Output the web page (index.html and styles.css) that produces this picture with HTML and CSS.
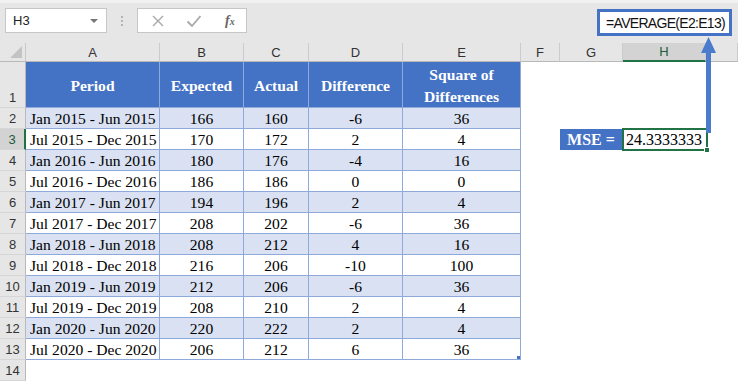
FILE: index.html
```html
<!DOCTYPE html>
<html lang="en">
<head>
    <meta charset="UTF-8">
    <meta name="viewport" content="width=device-width, initial-scale=1.0">
    <title>Mean Squared Error</title>
    <link rel="stylesheet" href="styles.css">
</head>
<body>
    <div class="formula-bar">
        <div class="name-box">
            <span>H3</span>
            <span class="caret"></span>
        </div>
        <div class="grip"><i></i><i></i><i></i></div>
        <div class="fx-buttons">
            <svg class="btn-icon" width="14" height="14" viewBox="0 0 14 14"><path d="M2 2 L12 12 M12 2 L2 12" stroke="#a8a8a8" stroke-width="1.4" fill="none"/></svg>
            <svg class="btn-icon" width="16" height="14" viewBox="0 0 16 14"><path d="M1.5 7.5 L6 12 L14.5 2" stroke="#a8a8a8" stroke-width="1.8" fill="none"/></svg>
            <span class="fx">f<sub>x</sub></span>
        </div>
    </div>

    <div class="callout">=AVERAGE(E2:E13)</div>
    <svg class="arrow" width="17" height="96" viewBox="0 0 17 96">
        <polygon points="8.5,0 16,16 1,16" fill="#4a7bcc"/>
        <rect x="6" y="15" width="5" height="81" fill="#4a7bcc"/>
    </svg>

    <div class="sheet">
        <!-- column headers -->
        <div class="corner"><span></span></div>
        <div class="col">A</div>
        <div class="col">B</div>
        <div class="col">C</div>
        <div class="col">D</div>
        <div class="col">E</div>
        <div class="col">F</div>
        <div class="col">G</div>
        <div class="col sel">H</div>
        <div class="col"></div>

        <div class="row">1</div>
        <div class="t th">Period</div>
        <div class="t th">Expected</div>
        <div class="t th">Actual</div>
        <div class="t th">Difference</div>
        <div class="t th">Square of<br>Differences</div>
        <div></div><div></div><div></div><div></div>

        <div class="row">2</div>
        <div class="t band l">Jan 2015 - Jun 2015</div>
        <div class="t band">166</div>
        <div class="t band">160</div>
        <div class="t band">-6</div>
        <div class="t band">36</div>
        <div></div><div></div><div></div><div></div>

        <div class="row sel">3</div>
        <div class="t l">Jul 2015 - Dec 2015</div>
        <div class="t">170</div>
        <div class="t">172</div>
        <div class="t">2</div>
        <div class="t">4</div>
        <div></div>
        <div class="mse-label">MSE =</div>
        <div class="mse-value">24.3333333<span class="handle"></span></div>
        <div></div>

        <div class="row">4</div>
        <div class="t band l">Jan 2016 - Jun 2016</div>
        <div class="t band">180</div>
        <div class="t band">176</div>
        <div class="t band">-4</div>
        <div class="t band">16</div>
        <div></div><div></div><div></div><div></div>

        <div class="row">5</div>
        <div class="t l">Jul 2016 - Dec 2016</div>
        <div class="t">186</div>
        <div class="t">186</div>
        <div class="t">0</div>
        <div class="t">0</div>
        <div></div><div></div><div></div><div></div>

        <div class="row">6</div>
        <div class="t band l">Jan 2017 - Jun 2017</div>
        <div class="t band">194</div>
        <div class="t band">196</div>
        <div class="t band">2</div>
        <div class="t band">4</div>
        <div></div><div></div><div></div><div></div>

        <div class="row">7</div>
        <div class="t l">Jul 2017 - Dec 2017</div>
        <div class="t">208</div>
        <div class="t">202</div>
        <div class="t">-6</div>
        <div class="t">36</div>
        <div></div><div></div><div></div><div></div>

        <div class="row">8</div>
        <div class="t band l">Jan 2018 - Jun 2018</div>
        <div class="t band">208</div>
        <div class="t band">212</div>
        <div class="t band">4</div>
        <div class="t band">16</div>
        <div></div><div></div><div></div><div></div>

        <div class="row">9</div>
        <div class="t l">Jul 2018 - Dec 2018</div>
        <div class="t">216</div>
        <div class="t">206</div>
        <div class="t">-10</div>
        <div class="t">100</div>
        <div></div><div></div><div></div><div></div>

        <div class="row">10</div>
        <div class="t band l">Jan 2019 - Jun 2019</div>
        <div class="t band">212</div>
        <div class="t band">206</div>
        <div class="t band">-6</div>
        <div class="t band">36</div>
        <div></div><div></div><div></div><div></div>

        <div class="row">11</div>
        <div class="t l">Jul 2019 - Dec 2019</div>
        <div class="t">208</div>
        <div class="t">210</div>
        <div class="t">2</div>
        <div class="t">4</div>
        <div></div><div></div><div></div><div></div>

        <div class="row">12</div>
        <div class="t band l">Jan 2020 - Jun 2020</div>
        <div class="t band">220</div>
        <div class="t band">222</div>
        <div class="t band">2</div>
        <div class="t band">4</div>
        <div></div><div></div><div></div><div></div>

        <div class="row">13</div>
        <div class="t l">Jul 2020 - Dec 2020</div>
        <div class="t">206</div>
        <div class="t">212</div>
        <div class="t">6</div>
        <div class="t last">36</div>
        <div></div><div></div><div></div><div></div>

        <div class="row">14</div>
        <div></div><div></div><div></div><div></div><div></div><div></div><div></div><div></div><div></div>
    </div>
</body>
</html>
```

FILE: styles.css
```css
* {
    box-sizing: border-box;
}

body {
    margin: 0;
    width: 738px;
    height: 382px;
    overflow: hidden;
    background-color: #fff;
    position: relative;
    font-family: "Liberation Serif", "Times New Roman", serif;
}

/* top strip with name box and formula buttons */
.formula-bar {
    height: 43px;
    background-color: #e6e6e6;
    border-top: 3px solid #f1f1f1;
    display: flex;
    align-items: flex-start;
    padding: 5px 0 0 5px;
    font-family: "Liberation Sans", Arial, sans-serif;
}

.name-box {
    width: 102px;
    height: 25px;
    background-color: #fff;
    border: 1px solid #c6c6c6;
    display: flex;
    align-items: center;
    justify-content: space-between;
    padding: 0 8px 0 7px;
    font-size: 13px;
    color: #222;
}

.caret {
    width: 0;
    height: 0;
    border-left: 4px solid transparent;
    border-right: 4px solid transparent;
    border-top: 4px solid #777;
}

.grip {
    width: 30px;
    height: 25px;
    display: flex;
    flex-direction: column;
    align-items: center;
    justify-content: center;
    gap: 2px;
}

.grip i {
    width: 2px;
    height: 2px;
    background-color: #b4b4b4;
}

.fx-buttons {
    width: 110px;
    height: 25px;
    background-color: #fff;
    border: 1px solid #c6c6c6;
    display: flex;
    align-items: center;
    padding: 0 0 0 13px;
    gap: 21px;
}

.fx {
    font-family: "Liberation Serif", serif;
    font-style: italic;
    font-weight: bold;
    font-size: 14px;
    color: #666;
    margin-left: 2px;
}

.fx sub {
    font-size: 10px;
    vertical-align: 0;
}

.callout {
    position: absolute;
    left: 597px;
    top: 9px;
    width: 135px;
    height: 27px;
    border: 3px solid #4472c4;
    background-color: #fff;
    font-family: "Liberation Sans", Arial, sans-serif;
    font-size: 14px;
    letter-spacing: -0.7px;
    color: #111;
    display: flex;
    align-items: center;
    justify-content: center;
    padding-left: 2px;
    z-index: 2;
}

.arrow {
    position: absolute;
    left: 700px;
    top: 37px;
    z-index: 3;
}

/* grid of cells */
.sheet {
    display: grid;
    grid-template-columns: 26px 134px 84px 65px 94px 118px 39px 63px 83px 32px;
    grid-template-rows: 19px 46px repeat(13, 21px);
}

.corner {
    background-color: #e6e6e6;
    border-right: 1px solid #c8c8c8;
    border-bottom: 1px solid #b9b9b9;
    position: relative;
}

.corner span {
    position: absolute;
    right: 3px;
    bottom: 3px;
    width: 0;
    height: 0;
    border-left: 12px solid transparent;
    border-bottom: 12px solid #c3c3c3;
}

.col {
    background-color: #e6e6e6;
    border-right: 1px solid #cbcbcb;
    border-bottom: 1px solid #b9b9b9;
    font-family: "Liberation Sans", Arial, sans-serif;
    font-size: 13px;
    color: #333;
    display: flex;
    align-items: center;
    justify-content: center;
}

.col.sel {
    background-color: #d3d3d3;
    border-bottom: 2px solid #217346;
    color: #1f5a3a;
}

.row {
    background-color: #e6e6e6;
    border-right: 1px solid #b9b9b9;
    border-bottom: 1px solid #d6d6d6;
    font-family: "Liberation Sans", Arial, sans-serif;
    font-size: 13px;
    color: #333;
    display: flex;
    align-items: flex-end;
    justify-content: center;
    padding-bottom: 2px;
}

.row.sel {
    background-color: #d3d3d3;
    border-right: 2px solid #217346;
    color: #1f5a3a;
}

.t {
    border-right: 1px solid #8eaadb;
    border-bottom: 1px solid #8eaadb;
    font-size: 15.6px;
    color: #000;
    display: flex;
    align-items: center;
    justify-content: center;
    white-space: nowrap;
    padding-top: 1px;
}

.t.l {
    justify-content: flex-start;
    padding-left: 4px;
}

.t.th {
    background-color: #4472c4;
    color: #fff;
    font-weight: bold;
    text-align: center;
    line-height: 22px;
    padding-top: 3px;
}

.t.band {
    background-color: #d9e1f2;
}

.t.last {
    position: relative;
}

.t.last::after {
    content: "";
    position: absolute;
    right: 0;
    bottom: 0;
    width: 3px;
    height: 3px;
    background-color: #4472c4;
}

.mse-label {
    background-color: #4472c4;
    color: #fff;
    font-weight: bold;
    font-size: 16px;
    display: flex;
    align-items: center;
    justify-content: center;
    margin-right: 1px;
}

.mse-value {
    border: 2px solid #217346;
    margin: -1px -2px -1px -1px;
    font-size: 16px;
    display: flex;
    align-items: center;
    justify-content: flex-end;
    padding-right: 4px;
    position: relative;
    z-index: 1;
}

.handle {
    position: absolute;
    right: -4px;
    bottom: -4px;
    width: 6px;
    height: 6px;
    background-color: #217346;
    border: 1px solid #fff;
}
```
